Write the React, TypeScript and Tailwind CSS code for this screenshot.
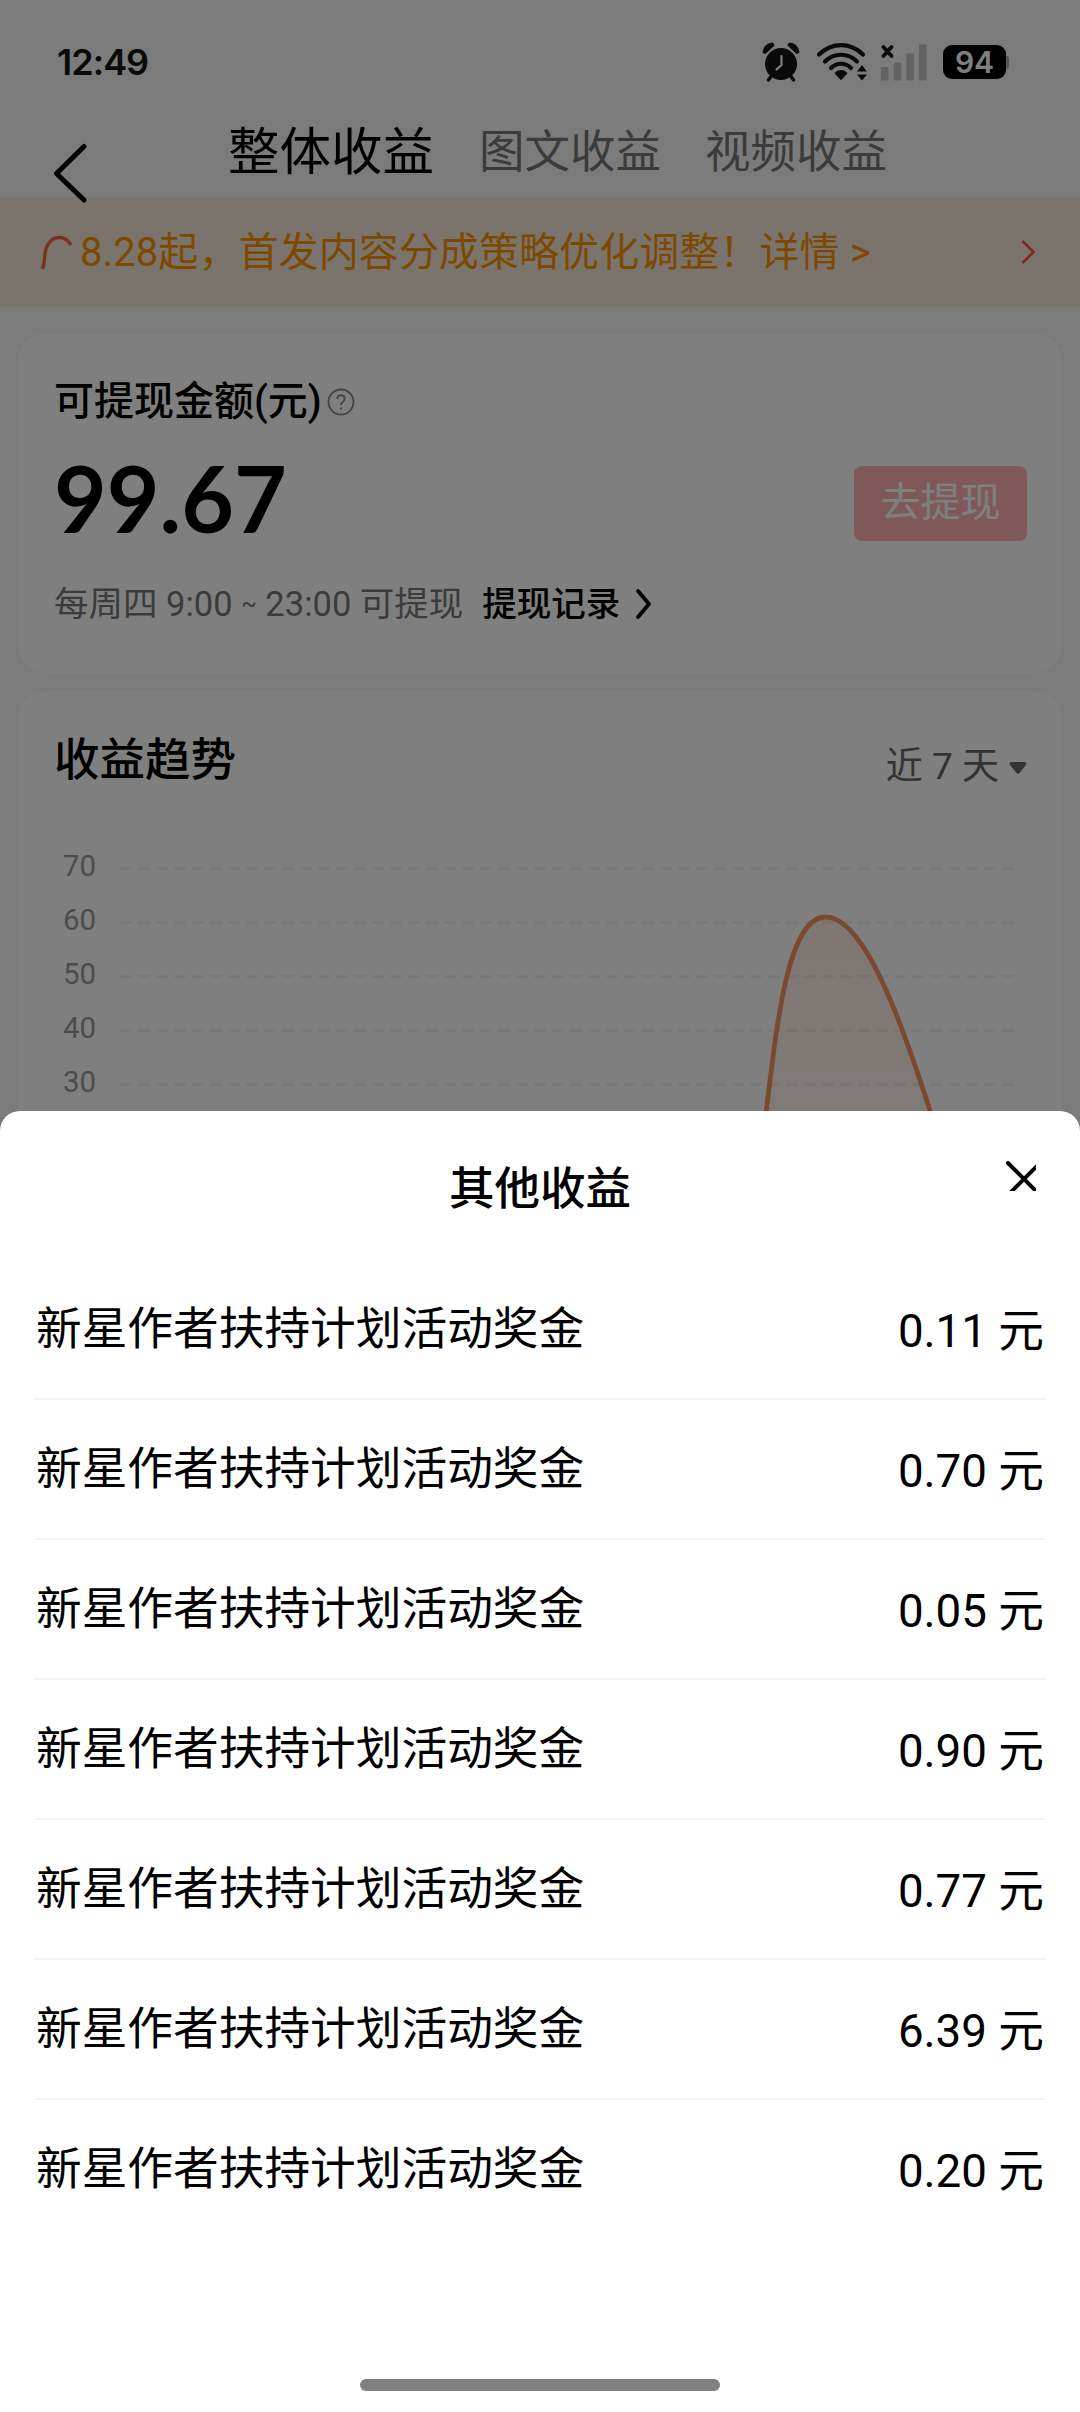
const tabs = ["图文收益", "视频收益"];

const axisLabels = [70, 60, 50, 40, 30];

const rewards = [
  { name: "新星作者扶持计划活动奖金", amount: "0.11" },
  { name: "新星作者扶持计划活动奖金", amount: "0.70" },
  { name: "新星作者扶持计划活动奖金", amount: "0.05" },
  { name: "新星作者扶持计划活动奖金", amount: "0.90" },
  { name: "新星作者扶持计划活动奖金", amount: "0.77" },
  { name: "新星作者扶持计划活动奖金", amount: "6.39" },
  { name: "新星作者扶持计划活动奖金", amount: "0.20" },
];

function AlarmIcon() {
  return (
    <svg width="38" height="40" viewBox="0 0 38 40" fill="none">
      <circle cx="19" cy="22" r="16" fill="#151515" />
      <path d="M10 33l-3.500 5M28 33l3.500 5" stroke="#151515" strokeWidth="3.400" strokeLinecap="round" />
      <path d="M1.500 10C2 5 6 1.500 10.500 1.500L11.500 3 3 11z" fill="#151515" stroke="#151515" strokeWidth="2" strokeLinejoin="round" />
      <path d="M36.500 10C36 5 32 1.500 27.500 1.500L26.500 3 35 11z" fill="#151515" stroke="#151515" strokeWidth="2" strokeLinejoin="round" />
      <path d="M19.500 14v9l-5 4.500" stroke="#fff" strokeWidth="2.200" strokeLinecap="round" strokeLinejoin="round" />
    </svg>
  );
}

function WifiIcon() {
  return (
    <svg width="52" height="38" viewBox="0 0 52 38" fill="none">
      <g stroke="#151515" strokeWidth="4.200" strokeLinecap="round">
        <path d="M3 11.500C16 -1 34 -1 47 11.500" />
        <path d="M9 18.500C18 9.500 32 9.500 41 18.500" />
        <path d="M15 25C20.500 19.300 29.500 19.300 35 25" />
      </g>
      <path d="M19 29.500c3.500-3.300 8.500-3.300 12 0 .4.400.4.800 0 1.200l-5 5.500c-.6.700-1.400.700-2 0l-5-5.500c-.4-.4-.4-.8 0-1.200z" fill="#151515" />
      <path d="M46 22l5 6.500H41zM46 37.500l5-6H41z" fill="#151515" />
    </svg>
  );
}

function SignalIcon() {
  return (
    <svg width="46" height="38" viewBox="0 0 46 38" fill="none">
      <path d="M2.500 4l8 9M10.500 4l-8 9" stroke="#151515" strokeWidth="3.800" strokeLinecap="round" />
      <g fill="#c6c6c6">
        <rect y="24" width="7.500" height="13.500" rx="1" />
        <rect x="12.700" y="19.500" width="7.500" height="18" rx="1" />
        <rect x="25.400" y="10.500" width="7.500" height="27" rx="1" />
        <rect x="38" y="1.500" width="7.500" height="36" rx="1" />
      </g>
    </svg>
  );
}

function StatusBar() {
  return (
    <div className="flex h-[124px] items-center justify-between pl-[57px] pr-[71px]">
      <span className="font-['Inter'] text-[36px] font-semibold tracking-[-1px] text-[#151515]">12:49</span>
      <div className="flex items-center">
        <AlarmIcon />
        <div className="ml-[16px]"><WifiIcon /></div>
        <div className="ml-[13px]"><SignalIcon /></div>
        <div className="ml-[16px] flex h-[34px] w-[63px] items-center justify-center rounded-[9px] bg-black font-['Inter'] text-[30px] font-semibold text-white">
          94
        </div>
        <div className="h-[13px] w-[3px] rounded-r-[3px] bg-[#aaa]" />
      </div>
    </div>
  );
}

function TopTabs() {
  return (
    <div className="flex h-[73px]">
      <svg className="mt-[17px] ml-[52px] shrink-0" width="36" height="64" viewBox="0 0 36 64" fill="none">
        <path d="M32 5.500L4.500 32.500 32 59" stroke="#000" strokeWidth="5" strokeLinecap="round" strokeLinejoin="round" />
      </svg>
      <div className="mt-[2px] ml-[140px] flex h-[54px] items-center">
        <span className="text-[51.5px] leading-[54px]">整体收益</span>
        <div className="ml-[45px] flex gap-[44px] text-[45.500px] leading-[54px] text-[#777]">
          {tabs.map((tab) => (
            <span key={tab}>{tab}</span>
          ))}
        </div>
      </div>
    </div>
  );
}

function NoticeBanner() {
  return (
    <div className="flex h-[110px] items-center bg-[#f5e9da] pr-[44px] pl-[40px] text-[#fb9300]">
      <svg width="33" height="38" viewBox="0 0 33 38" fill="none">
        <path d="M2.500 36C6 27 3 19 8 11.500C13 2.500 25 1.500 31 12" stroke="#f5653c" strokeWidth="3.400" />
      </svg>
      <span className="mt-[2px] ml-[7px] text-[40px] leading-[56px] tracking-[0.080px] whitespace-pre">
        8.28起，首发内容分成策略优化调整！详情 &gt;
      </span>
      <svg className="ml-auto" width="16" height="26" viewBox="0 0 16 26" fill="none">
        <path d="M2.500 2l11 11-11 11" stroke="#fb5a40" strokeWidth="2.800" />
      </svg>
    </div>
  );
}

function BalanceCard() {
  return (
    <section className="h-[340px] rounded-[28px] bg-white px-[36px] pt-[41px]">
      <div className="flex items-center">
        <h2 className="text-[40px] leading-[56px] font-medium">可提现金额(元)</h2>
        <svg className="ml-[5px]" width="28" height="28" viewBox="0 0 28 28" fill="none" stroke="#8a8a8a" strokeWidth="1.900">
          <circle cx="14" cy="14" r="12.500" />
          <path d="M10.300 11c0-5 7.400-4.800 7.400-.2 0 2.700-3.700 3-3.700 6.200M14 19.500v2" />
        </svg>
      </div>
      <div className="mt-[23px] flex h-[100px] items-center justify-between">
        <span className="pb-[10px] font-['Lato'] text-[91px] leading-[90px] font-bold">99.67</span>
        <button className="mr-[-1px] h-[75px] w-[173px] rounded-[8px] bg-[#ffb3b3] text-[40px] text-white">去提现</button>
      </div>
      <div className="mt-[26px] flex items-center text-[34.500px] leading-[50px]">
        <span className="text-[#777]">
          每周四 9:00 <span className="align-[4px] text-[23px] leading-none">~</span> 23:00 可提现
        </span>
        <span className="ml-[19px] font-medium">提现记录</span>
        <svg className="ml-[15px]" width="17" height="32" viewBox="0 0 17 32" fill="none">
          <path d="M3 3l11 13L3 29" stroke="#000" strokeWidth="3.800" strokeLinecap="round" strokeLinejoin="round" />
        </svg>
      </div>
    </section>
  );
}

function TrendChart() {
  return (
    <div className="mt-[46px] flex">
      <div className="ml-[9px] flex w-[57px] flex-col">
        {axisLabels.map((label) => (
          <span key={label} className="h-[54px] text-[29.500px] leading-[54px] text-[#999]">
            {label}
          </span>
        ))}
      </div>
      <svg width="900" height="300" viewBox="120 838 900 300" fill="none">
        <defs>
          <linearGradient id="trendFill" x1="0" y1="916" x2="0" y2="1240" gradientUnits="userSpaceOnUse">
            <stop offset="0" stopColor="#ff8a50" stopOpacity="0.15" />
            <stop offset="1" stopColor="#ff8a50" stopOpacity="0.04" />
          </linearGradient>
        </defs>
        {axisLabels.map((label, i) => (
          <path key={label} d={`M120 ${867.5 + i * 54}H1015`} stroke="#f2f2f2" strokeWidth="3" strokeDasharray="12 6" />
        ))}
        <path d="M763 1138C776 1030 786 916 825.500 916C865 916 903 1022 939 1138z" fill="url(#trendFill)" />
        <path d="M763 1138C776 1030 786 916 825.500 916C865 916 903 1022 939 1138" stroke="#f5935c" strokeWidth="4.800" />
      </svg>
    </div>
  );
}

function TrendCard() {
  return (
    <section className="mt-[18px] h-[800px] rounded-[28px] bg-white px-[36px] pt-[38px]">
      <div className="flex h-[64px] items-center justify-between">
        <h2 className="text-[45.500px] leading-[64px] font-medium">收益趋势</h2>
        <div className="mt-[11px] mr-[-1px] flex items-center text-[#666]">
          <span className="text-[37px] leading-[52px]">近 7 天</span>
          <svg className="mt-[3px] ml-[10px]" width="18" height="13" viewBox="0 0 18 13">
            <path d="M2.500 0h13c1.800 0 2.500 1.800 1.300 3.200l-6.300 7.900c-.9 1.100-2.100 1.100-3 0L1.200 3.200C0 1.800.7 0 2.500 0z" fill="#666" />
          </svg>
        </div>
      </div>
      <TrendChart />
    </section>
  );
}

function RewardSheet() {
  return (
    <div className="absolute inset-x-0 top-[1111px] bottom-0 flex flex-col rounded-t-[20px] bg-white">
      <div className="relative flex h-[149px] justify-center pt-[47px]">
        <h3 className="text-[45.500px] leading-[64px] font-medium">其他收益</h3>
        <svg className="absolute top-[50px] right-[44px]" width="30" height="30" viewBox="0 0 30 30" fill="none">
          <path d="M2 2l31 31M33 3L3 33" stroke="#000" strokeWidth="4" strokeLinecap="round" />
        </svg>
      </div>
      <div className="flex flex-col px-[35px]">
        {rewards.map((r, i) => (
          <div
            key={i}
            className="flex h-[140px] items-center justify-between border-b-2 border-[#f3f3f3] px-px pt-[3px] text-[45.700px] last:border-transparent"
          >
            <span>{r.name}</span>
            <span className="pt-[3px]">{r.amount} 元</span>
          </div>
        ))}
      </div>
      <div className="mx-auto mt-auto mb-[21px] h-[12px] w-[360px] rounded-full bg-[#808080]" />
    </div>
  );
}

export default function App() {
  return (
    <div className="relative h-[2412px] w-[1080px] overflow-hidden bg-[#f6f6f6] font-['Roboto','Noto_Sans_CJK_SC',sans-serif] text-black">
      <StatusBar />
      <TopTabs />
      <NoticeBanner />
      <main className="px-[18px] pt-[26px]">
        <BalanceCard />
        <TrendCard />
      </main>
      <div className="absolute inset-0 bg-black/50" />
      <RewardSheet />
    </div>
  );
}
